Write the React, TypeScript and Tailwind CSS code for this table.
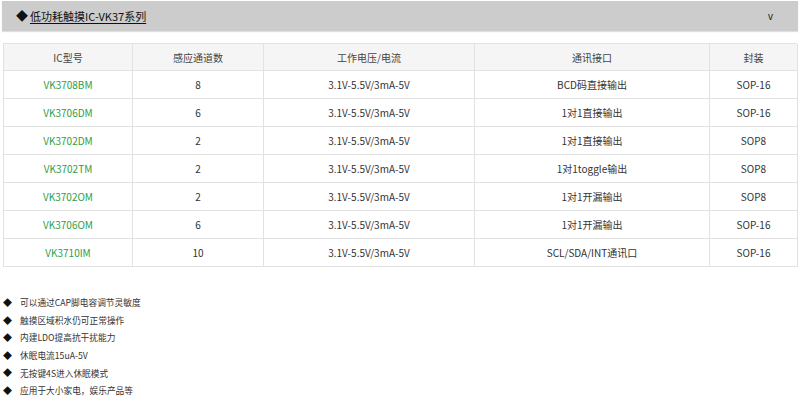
import React from "react";

const rows = [
  ["VK3708BM", "8", "3.1V-5.5V/3mA-5V", "BCD码直接输出", "SOP-16"],
  ["VK3706DM", "6", "3.1V-5.5V/3mA-5V", "1对1直接输出", "SOP-16"],
  ["VK3702DM", "2", "3.1V-5.5V/3mA-5V", "1对1直接输出", "SOP8"],
  ["VK3702TM", "2", "3.1V-5.5V/3mA-5V", "1对1toggle输出", "SOP8"],
  ["VK3702OM", "2", "3.1V-5.5V/3mA-5V", "1对1开漏输出", "SOP8"],
  ["VK3706OM", "6", "3.1V-5.5V/3mA-5V", "1对1开漏输出", "SOP-16"],
  ["VK3710IM", "10", "3.1V-5.5V/3mA-5V", "SCL/SDA/INT通讯口", "SOP-16"],
];

const heads = ["IC型号", "感应通道数", "工作电压/电流", "通讯接口", "封装"];

const bullets = [
  "可以通过CAP脚电容调节灵敏度",
  "触摸区域积水仍可正常操作",
  "内建LDO提高抗干扰能力",
  "休眠电流15uA-5V",
  "无按键4S进入休眠模式",
  "应用于大小家电，娱乐产品等",
];

export default function App() {
  return (
    <div className="w-[800px] h-[407px] overflow-hidden bg-white font-['Noto_Sans_CJK_SC','Noto_Sans',sans-serif] text-[#333]">
      <div className="pt-[1px] px-[2px]">
        <div className="h-[30px] bg-[#cccccc] flex items-center justify-between pl-[14px] pr-[25px] shadow-[0_1px_1px_rgba(0,0,0,0.12)]">
          <div className="flex items-center text-[11px] text-[#111]">
            <span className="text-[12px] mr-[2px]">◆</span>
            <span className="underline underline-offset-2">低功耗触摸IC-VK37系列</span>
          </div>
          <span className="text-[10px] text-[#222] font-['Liberation_Sans',sans-serif]">v</span>
        </div>
      </div>

      <div className="mt-[12px] ml-[3px] w-[794px] border-t border-l border-[#e2e2e2] grid grid-cols-[129px_131px_211px_235px_88px] text-[10px]">
        {heads.map((h) => (
          <div
            key={h}
            className="h-[27px] bg-[#f5f5f5] border-r border-b border-[#e2e2e2] flex items-center justify-center text-[#444]"
          >
            {h}
          </div>
        ))}
        {rows.map((r) =>
          r.map((c, i) => (
            <div
              key={r[0] + i}
              className={
                "h-[28px] border-r border-b border-[#e2e2e2] flex items-center justify-center " +
                (i === 0 ? "text-[#2e9e48]" : "text-[#333]")
              }
            >
              {c}
            </div>
          ))
        )}
      </div>

      <ul className="mt-[27px] ml-[3px] text-[8.7px] text-[#333]">
        {bullets.map((b) => (
          <li key={b} className="h-[17.6px] flex items-center">
            <span className="text-[9px] w-[17px] text-[#111]">◆</span>
            <span>{b}</span>
          </li>
        ))}
      </ul>
    </div>
  );
}
